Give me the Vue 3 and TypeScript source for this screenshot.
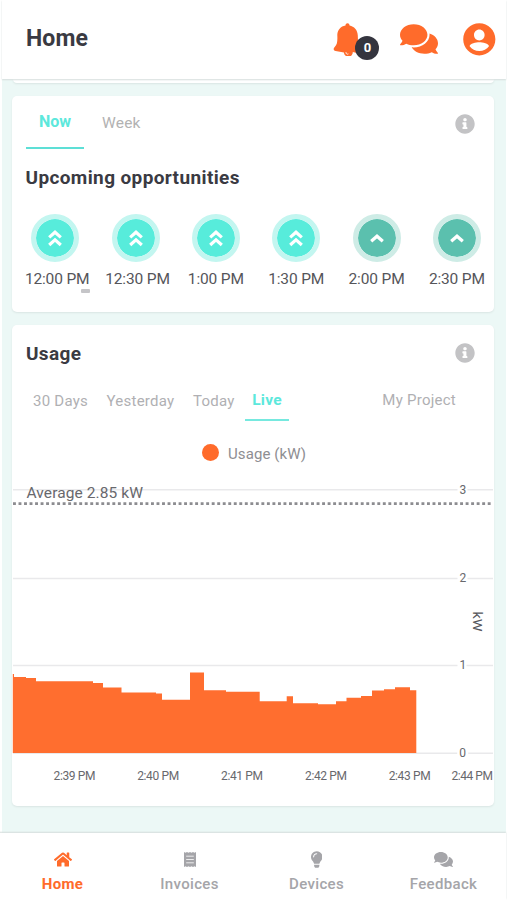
<script setup lang="ts">
interface Slot { time: string; level: 'high' | 'medium' }
interface Tick { label: string; x: number; y: number; w: number }

const slots: Slot[] = [
  { time: '12:00 PM', level: 'high' },
  { time: '12:30 PM', level: 'high' },
  { time: '1:00 PM', level: 'high' },
  { time: '1:30 PM', level: 'high' },
  { time: '2:00 PM', level: 'medium' },
  { time: '2:30 PM', level: 'medium' },
]

// Chart coordinates: 482 wide, origin at the card's left edge and the chart's top.
const gridLines: number[] = [9.7, 98.5, 185.5, 273.3]
const yTicks: Tick[] = [
  { label: '3', x: 447.5, y: 14.3, w: 6 },
  { label: '2', x: 447.5, y: 102.3, w: 6 },
  { label: '1', x: 447.5, y: 189.2, w: 5 },
  { label: '0', x: 447.2, y: 277.3, w: 7 },
]
const xTicks: Tick[] = [
  { label: '2:39 PM', x: 41.5, y: 300.2, w: 42 },
  { label: '2:40 PM', x: 125.2, y: 300.2, w: 42 },
  { label: '2:41 PM', x: 209, y: 300.2, w: 42 },
  { label: '2:42 PM', x: 293, y: 300.2, w: 42 },
  { label: '2:43 PM', x: 376.7, y: 300.2, w: 42 },
  { label: '2:44 PM', x: 439.4, y: 300.2, w: 41.5 },
]

const steps: [number, number][] = [
  [0.8, 194], [2, 197], [14, 198], [24, 201.3], [81, 203], [91, 207.5], [109.5, 212.5],
  [144, 213.5], [150, 219.8], [178, 192.5], [192, 210.2], [214, 211.7], [247.7, 221.3],
  [274.7, 216.3], [281, 223.2], [306, 224.2], [324, 221.2], [334.5, 217.8], [349, 216],
  [360, 210.5], [372, 209.2], [383, 207.3], [398, 210.3],
]
const area: string =
  'M0.8 273V' + steps.map(([x, y], i) => (i === 0 ? `${y}` : `H${x}V${y}`)).join('') + 'H404.3V273Z'

const bubbles =
  'M416 192c0-88.4-93.1-160-208-160S0 103.6 0 192c0 34.3 14.1 65.9 38 92-13.4 30.2-35.5 54.2-35.8 54.5-2.2 2.3-2.8 5.7-1.5 8.7S4.8 352 8 352c36.6 0 66.9-12.3 88.7-25 32.2 15.7 70.3 25 111.3 25 114.9 0 208-71.6 208-160zm122 220c23.9-26 38-57.7 38-92 0-66.9-53.5-124.2-129.3-148.1.9 6.6 1.3 13.3 1.3 20.1 0 105.9-107.7 192-240 192-10.8 0-21.3-.8-31.7-1.9C207.8 439.6 281.8 480 368 480c41 0 79.1-9.2 111.3-25 21.8 12.7 52.1 25 88.7 25 3.2 0 6.1-1.9 7.3-4.8 1.3-2.9.7-6.3-1.5-8.7-.3-.3-22.4-24.2-35.8-54.5z'
const info =
  'M256 8C119.043 8 8 119.083 8 256c0 136.997 111.043 248 248 248s248-111.003 248-248C504 119.083 392.957 8 256 8zm0 94c25 0 44 18.804 44 44s-18.804 42-44 42-44-18.804-44-42 18.804-44 44-44zm66 272c0 6.627-5.373 12-12 12h-108c-6.627 0-12-5.373-12-12v-30c0-6.627 5.373-12 12-12h14v-64h-14c-6.627 0-12-5.373-12-12v-30c0-6.627 5.373-12 12-12h78c6.627 0 12 5.373 12 12v106h12c6.627 0 12 5.373 12 12v30z'
</script>

<template>
  <div class="app">
    <header class="top">
      <h1>Home</h1>
      <div class="actions">
        <button class="bell" aria-label="Notifications">
          <svg width="28" height="34" viewBox="0 0 28 34">
            <path d="M12.5 3.600C12.400 .300 16.600 .300 16.600 3.600C21 4.600 24.600 8 24.800 13.500C25 21.500 25.600 26 26.500 30C26.500 31 25.500 31.200 24 30.900L19.800 30A4.200 4.200 0 0 1 10.900 30.400L2.600 29C.2 28.500.2 26.400 1.700 25C4.300 22.500 4.600 19 4.300 13C4.500 8 7.600 4.400 12.500 3.600Z" />
            <path d="M13 30.2a1.6 1.6 0 0 0 2.4 1.7" fill="none" stroke="#fff" stroke-width=".9" />
          </svg>
          <span class="count">0</span>
        </button>
        <button class="chat" aria-label="Messages">
          <svg width="38" height="34" viewBox="0 0 576 512"><path :d="bubbles" /></svg>
        </button>
        <button class="account" aria-label="Account">
          <svg width="38.6" height="38.6" viewBox="0 0 24 24">
            <path d="M12 2C6.480 2 2 6.480 2 12s4.480 10 10 10 10-4.480 10-10S17.520 2 12 2zm0 3.900c1.800 0 3.300 1.500 3.300 3.400s-1.500 3.400-3.300 3.400-3.300-1.500-3.300-3.400 1.500-3.400 3.300-3.400zm0 13.300c-2.500 0-4.710-1.080-6-2.920.03-1.790 4-2.480 6-2.480s5.970.690 6 2.480c-1.290 1.840-3.500 2.920-6 2.920z" />
          </svg>
        </button>
      </div>
    </header>

    <main>
      <div class="previous"></div>

      <section class="card opportunities">
        <div class="row">
          <nav class="tabs">
            <a class="tab now active">Now</a>
            <a class="tab week">Week</a>
          </nav>
          <svg class="info" width="20" height="20" viewBox="0 0 512 512"><path :d="info" /></svg>
        </div>
        <h2 class="upcoming">Upcoming opportunities</h2>
        <ul class="slots">
          <li v-for="slot in slots" :key="slot.time" :class="slot.level">
            <span class="disc">
              <svg width="16" height="18" viewBox="0 0 16 18">
                <template v-if="slot.level === 'high'">
                  <path d="M2.200 8.400L8 3.200L13.800 8.400" />
                  <path d="M2.200 16L8 10.800L13.800 16" />
                </template>
                <path v-else d="M2.200 12.300L8 7.200L13.800 12.300" />
              </svg>
            </span>
            <span class="time" :class="{ long: slot.time.length > 7 }">{{ slot.time }}</span>
          </li>
        </ul>
        <span class="scroll"></span>
      </section>

      <section class="card usage">
        <div class="row head">
          <h2>Usage</h2>
          <svg class="info" width="20" height="20" viewBox="0 0 512 512"><path :d="info" /></svg>
        </div>
        <nav class="ranges">
          <a class="days">30 Days</a>
          <a class="yesterday">Yesterday</a>
          <a class="today">Today</a>
          <a class="live">Live</a>
          <a class="project">My Project</a>
        </nav>
        <div class="legend"><i></i><span>Usage (kW)</span></div>
        <svg class="chart" width="482" height="320" viewBox="0 0 482 320">
          <line v-for="y in gridLines" :key="y" class="grid" x1="1" x2="481" :y1="y" :y2="y" />
          <g v-for="t in yTicks" :key="t.label">
            <rect :x="t.x - 2" :y="t.y - 9" :width="t.w + 4" height="10" fill="#fff" />
            <text class="tick" :x="t.x" :y="t.y">{{ t.label }}</text>
          </g>
          <path class="area" :d="area" />
          <line class="average" x1="1" x2="480" y1="23.600" y2="23.600" />
          <text class="avg" x="14.500" y="18.300" textLength="116.500">Average 2.85 kW</text>
          <text class="unit" transform="translate(461 131.500) rotate(90)" textLength="20" lengthAdjust="spacingAndGlyphs">kW</text>
          <text v-for="t in xTicks" :key="t.label" class="tick" :x="t.x" :y="t.y" :textLength="t.w">{{ t.label }}</text>
        </svg>
      </section>
    </main>

    <nav class="bottom">
      <a class="current">
        <svg width="18" height="16" viewBox="0 0 576 512"><path d="M280.370 148.260L96 300.110V464a16 16 0 0 0 16 16l112.060-.290a16 16 0 0 0 15.920-16V368a16 16 0 0 1 16-16h64a16 16 0 0 1 16 16v95.640a16 16 0 0 0 16 16.050L464 480a16 16 0 0 0 16-16V300L295.670 148.260a12.190 12.190 0 0 0-15.300 0zM571.600 251.470L488 182.560V44.050a12 12 0 0 0-12-12h-56a12 12 0 0 0-12 12v72.610L318.470 43a48 48 0 0 0-61 0L4.340 251.470a12 12 0 0 0-1.600 16.900l25.500 31A12 12 0 0 0 45.150 301l235.220-193.740a12.190 12.190 0 0 1 15.300 0L530.900 301a12 12 0 0 0 16.900-1.600l25.500-31a12 12 0 0 0-1.700-16.930z" /></svg>
        <span>Home</span>
      </a>
      <a class="invoices">
        <svg width="14" height="16" viewBox="0 0 14 16">
          <path d="M1 .5L2.500 1.300L4 .5L5.500 1.300L7 .5L8.500 1.300L10 .5L11.500 1.300L13 .5V15.500L11.500 14.700L10 15.500L8.500 14.700L7 15.500L5.500 14.700L4 15.500L2.500 14.700L1 15.500Z" />
          <path d="M3.200 4.700H10.800M3.200 8H10.800M3.200 11.300H10.800" stroke="#fff" stroke-width=".8" />
        </svg>
        <span>Invoices</span>
      </a>
      <a class="devices">
        <svg width="11.500" height="16.500" viewBox="0 0 352 512"><path d="M96.060 454.350c.01 6.290 1.870 12.450 5.360 17.690l17.090 25.690a31.990 31.990 0 0 0 26.640 14.280h61.710a31.990 31.990 0 0 0 26.640-14.280l17.090-25.690a31.989 31.989 0 0 0 5.360-17.690l.04-38.350H96.010l.05 38.350zM0 176c0 44.370 16.450 84.850 43.560 115.780 16.520 18.850 42.360 58.230 52.210 91.450.04.26.07.52.11.78h160.240c.04-.26.07-.51.11-.78 9.850-33.220 35.690-72.600 52.210-91.450C335.550 260.850 352 220.370 352 176 352 78.610 272.910-.3 175.450 0 73.440.31 0 82.970 0 176zm176-80c-44.110 0-80 35.890-80 80 0 8.840-7.160 16-16 16s-16-7.160-16-16c0-61.760 50.240-112 112-112 8.840 0 16 7.160 16 16s-7.160 16-16 16z" /></svg>
        <span>Devices</span>
      </a>
      <a class="feedback">
        <svg width="19" height="17" viewBox="0 0 576 512"><path :d="bubbles" /></svg>
        <span>Feedback</span>
      </a>
    </nav>
  </div>
</template>

<style>
body { margin: 0; background: #fff; }
</style>

<style scoped>
* { box-sizing: border-box; }
.app {
  width: 507px; height: 900px; overflow: hidden; padding: 0 1px 0 2px;
  display: flex; flex-direction: column; background: #fff; color: #3a3a42;
  font-family: Roboto, "Liberation Sans", sans-serif; font-size: 16px; line-height: 20px;
}
h1, h2, ul { margin: 0; padding: 0; }
a, span, h1, h2 { white-space: nowrap; }
.top {
  flex: none; height: 79px; padding: 0 7px 0 24px; display: flex; justify-content: space-between;
  position: relative; background: #fff; box-shadow: 0 1px 1.500px #d5dddc;
}
h1 { margin-top: 25px; font-size: 23px; line-height: 28px; font-weight: 700; letter-spacing: .1px; }
.actions { display: flex; align-items: flex-start; }
button { padding: 0; border: 0; background: none; display: flex; align-items: flex-start; fill: #ff6b2b; }
svg { display: block; }
.bell { position: relative; width: 46px; height: 40px; margin: 22px 21px 0 0; }
.count {
  position: absolute; left: 22px; top: 14px; width: 24px; height: 24px; border-radius: 50%;
  background: #34353f; color: #fff; font: 700 13px/24px Roboto, sans-serif; text-align: center;
}
.chat { margin: 22px 22px 0 0; }
.account { margin-top: 19.700px; }
main { flex: none; height: 754px; padding: 0 11px 0 10px; background: #ecf8f6; }
.previous { height: 4px; margin: 0 1px 13px; background: #fff; border-radius: 0 0 5px 5px; box-shadow: 0 1px 2px #d9e5e3; }
.card { background: #fff; border-radius: 5px; box-shadow: 0 1px 2px #d9e5e3; width: 482px; }
.opportunities { position: relative; height: 216px; margin-bottom: 13px; }
.row { display: flex; justify-content: space-between; padding: 0 19px 0 14px; }
.info { fill: #c3c3c5; margin-top: 18px; }
.tabs { display: flex; color: #b2b2b2; }
.tab { height: 53px; padding-top: 17px; }
.now { width: 58px; text-align: center; border-bottom: 2px solid #5ddfd6; padding-top: 16px; }
.active, .live { color: #5de8dc; font-weight: 700; }
.week { margin-left: 18px; letter-spacing: .2px; font-size: 15.500px; }
h2 { font-size: 19px; font-weight: 700; line-height: 24px; }
.upcoming { margin: 17px 0 0 13.500px; letter-spacing: .38px; }
.slots { list-style: none; display: grid; grid-template-columns: repeat(6, 80.350px); padding: 24px 0 0 3px; }
.slots li { display: flex; flex-direction: column; align-items: center; }
.disc {
  width: 48px; height: 48px; border: 5px solid #c3f6f0; border-radius: 50%; background: #57ecdb;
  background-clip: padding-box; display: grid; place-items: center;
}
.medium .disc { background-color: #5bc0ae; border-color: #ceece6; }
.disc path { fill: none; stroke: #fff; stroke-width: 3.200px; }
.time { margin-top: 7px; font-size: 15.500px; letter-spacing: -.15px; color: #55555a; }
.long { transform: translateX(2px); }
.scroll { position: absolute; left: 69px; top: 193px; width: 9px; height: 3.500px; border-radius: 1px; background: #c5c5c8; }
.usage { height: 481px; }
.head { height: 58px; }
.head h2 { margin-top: 17px; letter-spacing: .35px; }
.ranges { display: flex; color: #b0b0b3; height: 38px; padding: 8px 38px 0 21px; font-size: 15px; letter-spacing: .25px; }
.ranges a { height: 30px; }
.days { width: 55.500px; }
.yesterday { width: 68px; margin-left: 18px; }
.today { width: 41px; margin-left: 18.500px; }
.ranges .live { width: 44px; margin: -1px 0 0 11px; height: 31px; text-align: center; font-size: 15.500px; border-bottom: 2.500px solid #76e9df; }
.project { margin: -1px 0 0 auto; }
.legend { display: flex; align-items: center; height: 59px; padding: 4px 0 0 189.500px; color: #8e8e92; font-size: 15px; letter-spacing: .1px; }
.legend i { width: 17px; height: 17px; border-radius: 50%; background: #ff6b2b; margin-right: 9.500px; }
.legend span { margin-top: 2px; }
.chart { font-family: Roboto, sans-serif; }
.grid { stroke: #e9e9eb; stroke-width: 1.600px; }
.area { fill: #ff6e2f; }
.average { stroke: #8c8c90; stroke-width: 2.600px; stroke-dasharray: 2.900 2.620; }
.avg { font-size: 15.500px; fill: #68686d; }
.unit { font-size: 13.500px; fill: #55555a; }
.tick { font-size: 12px; fill: #68686d; }
.bottom {
  flex: 1; display: grid; grid-template-columns: repeat(4, 127px); background: #fff;
  margin-left: -3px; position: relative; box-shadow: 0 -1px 1.500px #d5dddc; color: #a5a5a9; fill: #a5a5a9; font-size: 15px; font-weight: 500;
}
.bottom a { display: flex; flex-direction: column; align-items: center; padding-top: 18px; }
.bottom svg { height: 17px; }
.bottom span { margin-top: 6px; letter-spacing: .35px; }
.bottom .current { color: #ff6b2b; fill: #ff6b2b; }
.current span { font-weight: 700; }
</style>
